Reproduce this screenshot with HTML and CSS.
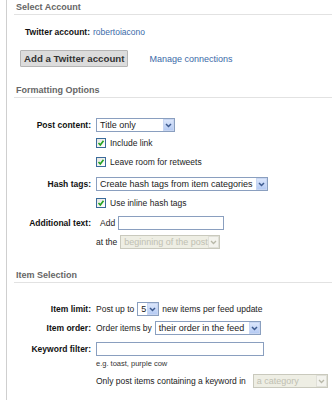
FILE: index.html
```html
<!DOCTYPE html>
<html lang="en">
<head>
    <meta charset="UTF-8">
    <meta name="viewport" content="width=device-width, initial-scale=1.0">
    <title>Twitter Feed Settings</title>
    <link rel="stylesheet" href="styles.css">
</head>
<body>
    <div class="panel">
        <!-- Select Account -->
        <h2 class="section-title">Select Account</h2>
        <div class="account-row">
            <span class="strong">Twitter account:</span>
            <a href="#" class="link">robertoiacono</a>
        </div>
        <div class="account-actions">
            <button class="btn">Add a Twitter account</button>
            <a href="#" class="link link-lg">Manage connections</a>
        </div>

        <!-- Formatting Options -->
        <h2 class="section-title mt-17">Formatting Options</h2>
        <div class="field mt-20">
            <span class="label">Post content:</span>
            <div class="value">
                <span class="select w-79"><span class="sel-text">Title only</span><span class="arrow"><svg width="7" height="5" viewBox="0 0 7 5"><path d="M1 1 L3.5 3.5 L6 1" fill="none" stroke="#3d5a8e" stroke-width="1.5"/></svg></span></span>
            </div>
        </div>
        <div class="field mt-4">
            <span></span>
            <label class="value check"><span class="box"><svg width="8" height="8" viewBox="0 0 8 8"><path d="M1.5 4 L3.3 6 L6.5 1.8" fill="none" stroke="#21a121" stroke-width="1.6"/></svg></span>Include link</label>
        </div>
        <div class="field mt-5">
            <span></span>
            <label class="value check"><span class="box"><svg width="8" height="8" viewBox="0 0 8 8"><path d="M1.5 4 L3.3 6 L6.5 1.8" fill="none" stroke="#21a121" stroke-width="1.6"/></svg></span>Leave room for retweets</label>
        </div>
        <div class="field mt-8">
            <span class="label">Hash tags:</span>
            <div class="value">
                <span class="select w-172"><span class="sel-text">Create hash tags from item categories</span><span class="arrow"><svg width="7" height="5" viewBox="0 0 7 5"><path d="M1 1 L3.5 3.5 L6 1" fill="none" stroke="#3d5a8e" stroke-width="1.5"/></svg></span></span>
            </div>
        </div>
        <div class="field mt-5">
            <span></span>
            <label class="value check"><span class="box"><svg width="8" height="8" viewBox="0 0 8 8"><path d="M1.5 4 L3.3 6 L6.5 1.8" fill="none" stroke="#21a121" stroke-width="1.6"/></svg></span>Use inline hash tags</label>
        </div>
        <div class="field mt-6">
            <span class="label">Additional text:</span>
            <div class="value">
                <span class="pad-l4">Add</span>
                <span class="input w-106"></span>
            </div>
        </div>
        <div class="field mt-5">
            <span></span>
            <div class="value">
                <span>at the</span>
                <span class="select disabled w-100"><span class="sel-text">beginning of the post</span><span class="arrow"><svg width="7" height="5" viewBox="0 0 7 5"><path d="M1 1 L3.5 3.5 L6 1" fill="none" stroke="#b8b8a8" stroke-width="1.3"/></svg></span></span>
            </div>
        </div>

        <!-- Item Selection -->
        <h2 class="section-title mt-20">Item Selection</h2>
        <div class="field mt-19">
            <span class="label">Item limit:</span>
            <div class="value">
                <span>Post up to</span>
                <span class="select w-22"><span class="sel-text">5</span><span class="arrow"><svg width="7" height="5" viewBox="0 0 7 5"><path d="M1 1 L3.5 3.5 L6 1" fill="none" stroke="#3d5a8e" stroke-width="1.5"/></svg></span></span>
                <span>new items per feed update</span>
            </div>
        </div>
        <div class="field mt-5">
            <span class="label">Item order:</span>
            <div class="value">
                <span>Order items by</span>
                <span class="select w-106"><span class="sel-text">their order in the feed</span><span class="arrow"><svg width="7" height="5" viewBox="0 0 7 5"><path d="M1 1 L3.5 3.5 L6 1" fill="none" stroke="#3d5a8e" stroke-width="1.5"/></svg></span></span>
            </div>
        </div>
        <div class="field mt-7">
            <span class="label">Keyword filter:</span>
            <div class="value">
                <span class="input w-168"></span>
            </div>
        </div>
        <div class="field hint">
            <span></span>
            <span class="value hint-text">e.g. toast, purple cow</span>
        </div>
        <div class="field mt-7">
            <span></span>
            <div class="value">
                <span>Only post items containing a keyword in</span>
                <span class="select disabled w-75 ml-3"><span class="sel-text">a category</span><span class="arrow"><svg width="7" height="5" viewBox="0 0 7 5"><path d="M1 1 L3.5 3.5 L6 1" fill="none" stroke="#b8b8a8" stroke-width="1.3"/></svg></span></span>
            </div>
        </div>
    </div>
</body>
</html>
```

FILE: styles.css
```css
* {
    margin: 0;
    padding: 0;
    box-sizing: border-box;
}

:root {
    --text: #222222;
    --heading: #666666;
    --link: #3b6aa8;
    --rule: #e2e2e2;
    --edge: #cfcfcf;
    --field-border: #8a9fbf;
}

body {
    background: #ffffff;
    color: var(--text);
    font-family: 'Liberation Sans', Arial, sans-serif;
    font-size: 8.5px;
    line-height: 14px;
}

.panel {
    margin-left: 6px;
    border-left: 1px solid var(--edge);
    min-height: 100vh;
    padding-top: 1px;
}

.section-title {
    margin-left: 7px;
    padding-left: 2px;
    font-size: 9px;
    font-weight: 700;
    color: var(--heading);
    line-height: 13px;
    border-bottom: 1px solid var(--rule);
}

.strong {
    font-weight: 700;
    color: #111;
}

.link {
    color: var(--link);
    text-decoration: none;
}

.link-lg {
    font-size: 9px;
}

.account-row {
    margin-top: 10px;
    padding-left: 18px;
    display: flex;
    gap: 3px;
    height: 14px;
    align-items: center;
}

.account-actions {
    margin-top: 11px;
    padding-left: 13px;
    display: flex;
    align-items: center;
    gap: 21px;
}

.btn {
    height: 17px;
    padding: 0 3px;
    background: #dcdcdc;
    border: 1px solid #b5b5b5;
    border-radius: 1px;
    font-family: 'Liberation Sans', Arial, sans-serif;
    font-size: 9.7px;
    font-weight: 700;
    color: #333;
    white-space: nowrap;
}

.field {
    display: grid;
    grid-template-columns: 84px 1fr;
    column-gap: 5px;
    height: 14px;
    align-items: center;
}

.label {
    text-align: right;
    font-weight: 700;
    color: #111;
}

.value {
    display: flex;
    align-items: center;
    gap: 3px;
    white-space: nowrap;
}

.check {
    gap: 4px;
}

.box {
    width: 10px;
    height: 10px;
    border: 1px solid #3a6a9a;
    background: linear-gradient(135deg, #e6e6e0, #ffffff);
    display: flex;
    align-items: center;
    justify-content: center;
}

.select {
    height: 14px;
    border: 1px solid var(--field-border);
    background: #ffffff;
    display: flex;
    align-items: center;
    font-size: 9px;
    color: #222;
}

.sel-text {
    flex: 1;
    padding-left: 3px;
    overflow: hidden;
}

.arrow {
    width: 11px;
    height: 12px;
    background: linear-gradient(#dbe6fb, #b6cbf3);
    border: 1px solid #c8d6f2;
    display: flex;
    align-items: center;
    justify-content: center;
}

.select.disabled {
    background: #eeeee4;
    border-color: #c9c9bd;
    color: #c0c0b2;
}

.select.disabled .arrow {
    background: #f3f3ee;
    border-color: #e0e0d8;
}

.input {
    height: 14px;
    border: 1px solid var(--field-border);
    background: #ffffff;
}

.hint {
    height: 10px;
    margin-top: 1px;
}

.hint-text {
    font-size: 7.5px;
    color: #333;
}

.pad-l4 { padding-left: 4px; }
.ml-3 { margin-left: 4px; }

.w-22 { width: 22px; }
.w-75 { width: 75px; }
.w-79 { width: 79px; }
.w-100 { width: 100px; }
.w-106 { width: 106px; }
.w-168 { width: 168px; }
.w-172 { width: 172px; }

.mt-4 { margin-top: 4px; }
.mt-5 { margin-top: 5px; }
.mt-6 { margin-top: 6px; }
.mt-7 { margin-top: 7px; }
.mt-8 { margin-top: 8px; }
.mt-17 { margin-top: 17px; }
.mt-19 { margin-top: 19px; }
.mt-20 { margin-top: 20px; }
```
